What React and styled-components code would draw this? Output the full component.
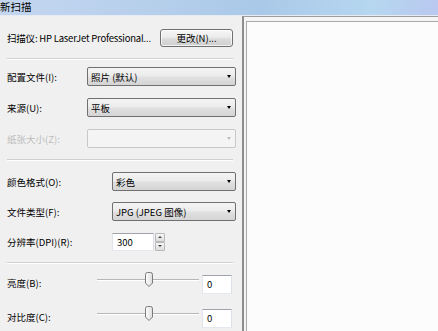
import React from "react";
import styled, { createGlobalStyle } from "styled-components";

const Global = createGlobalStyle`
  html, body { margin: 0; padding: 0; background: #f0f0f0; overflow: hidden; }
  body { font-family: "Noto Sans CJK SC", "Liberation Sans", sans-serif; font-size: 9.5px; color: #000; }
`;

const Window = styled.div`
  width: 438px;
  height: 331px;
  display: flex;
  flex-direction: column;
  overflow: hidden;
`;

const TitleBar = styled.div`
  height: 15px;
  flex: none;
  background: linear-gradient(to right, #c4d6f0 0%, #b8d0ec 30%, #a9c9e8 60%, #b6d7f0 85%, #b9c8ef 100%);
  font-size: 10.5px;
  line-height: 13px;
  padding-left: 0;
  white-space: nowrap;
  overflow: hidden;
`;

const Body = styled.div`
  flex: 1;
  display: flex;
  border-top: 1px solid #e6ecf2;
  min-height: 0;
`;

const Left = styled.div`
  width: 242px;
  flex: none;
  box-sizing: border-box;
  padding: 12px 6px 0 7px;
  display: flex;
  flex-direction: column;
`;

const ScannerRow = styled.div`
  display: flex;
  align-items: center;
  justify-content: space-between;
  height: 19px;
  padding-right: 3px;
  white-space: nowrap;
`;

const ScannerName = styled.span`
  letter-spacing: -0.2px;
`;

const Button = styled.div`
  width: 73px;
  height: 18px;
  box-sizing: border-box;
  border: 1px solid #707070;
  border-radius: 3px;
  background: linear-gradient(#f6f6f6 0%, #ececec 45%, #dcdcdc 55%, #cfcfcf 100%);
  box-shadow: inset 0 0 0 1px rgba(255,255,255,0.7);
  display: flex;
  align-items: center;
  justify-content: center;
  font-size: 9.5px;
  flex: none;
`;

const Separator = styled.div`
  height: 0;
  border-top: 1px solid #d0d0d0;
  border-bottom: 1px solid #ffffff;
  margin-right: 3px;
`;

const Section = styled.div`
  display: flex;
  flex-direction: column;
  gap: ${p => p.$gap}px;
  padding: ${p => p.$pt}px 0 ${p => p.$pb}px;
`;

const Row = styled.div`
  display: flex;
  align-items: center;
  height: 19px;
`;

const Label = styled.div`
  width: ${p => p.$w}px;
  flex: none;
  white-space: nowrap;
  color: ${p => (p.$disabled ? "#bcbcbc" : "#000")};
`;

const Combo = styled.div`
  flex: 1;
  height: 19px;
  box-sizing: border-box;
  border: 1px solid ${p => (p.$disabled ? "#c8c8c8" : "#707070")};
  border-radius: 2px;
  background: ${p =>
    p.$disabled
      ? "#f4f4f4"
      : "linear-gradient(#f4f4f4 0%, #ececec 45%, #e0e0e0 55%, #d4d4d4 100%)"};
  display: flex;
  align-items: center;
  padding-left: 3px;
  padding-right: 4px;
  white-space: nowrap;
`;

const ComboText = styled.span`
  flex: 1;
`;

const Arrow = styled.span`
  width: 0;
  height: 0;
  border-left: 2.5px solid transparent;
  border-right: 2.5px solid transparent;
  border-top: 3px solid ${p => (p.$disabled ? "#bcbcbc" : "#000")};
`;

const Field = styled.div`
  width: ${p => p.$w}px;
  height: 18px;
  box-sizing: border-box;
  border: 1px solid #abadb3;
  border-top-color: #a0a3ab;
  border-left-color: #e2e3ea;
  border-right-color: #dbdfe6;
  border-bottom-color: #e3e9ef;
  background: #fff;
  display: flex;
  align-items: center;
  padding-left: 4px;
  flex: none;
`;

const Spin = styled.div`
  display: flex;
  flex-direction: column;
  margin-left: 1px;
  height: 18px;
  width: 10px;
`;

const SpinBtn = styled.div`
  flex: 1;
  box-sizing: border-box;
  border: 1px solid #b8b8b8;
  border-radius: 1px;
  background: linear-gradient(#f6f6f6, #dedede);
  display: flex;
  align-items: center;
  justify-content: center;
`;

const SmallArrow = styled.span`
  width: 0;
  height: 0;
  border-left: 2px solid transparent;
  border-right: 2px solid transparent;
  ${p => (p.$up ? "border-bottom: 2px solid #444;" : "border-top: 2px solid #444;")}
`;

const SliderArea = styled.div`
  position: relative;
  width: 102px;
  height: 19px;
  flex: none;
  margin-right: 3px;
`;

const Track = styled.div`
  position: absolute;
  left: 0;
  right: 0;
  top: 6px;
  height: 0;
  border-top: 1px solid #b7b7b7;
  border-bottom: 1px solid #ffffff;
`;

const Thumb = styled.svg`
  position: absolute;
  left: 47px;
  top: -1px;
`;

const ValueBox = styled(Field)`
  width: 30px;
  height: 19px;
  margin-top: 3px;
`;

const Preview = styled.div`
  flex: 1;
  display: flex;
  border-left: 2px solid #8e8e8e;
  border-top: 1px solid #9d9d9d;
  padding: 4px 0 0 2px;
  background: #f4f4f4;
`;

const PreviewInner = styled.div`
  flex: 1;
  border-left: 1px solid #a9a9a9;
  border-top: 1px solid #a9a9a9;
  background: #fcfcfc;
`;

function ComboBox({ children, disabled }) {
  return (
    <Combo $disabled={disabled}>
      <ComboText>{children}</ComboText>
      <Arrow $disabled={disabled} />
    </Combo>
  );
}

function Slider() {
  return (
    <SliderArea>
      <Track />
      <Thumb width="10" height="16" viewBox="0 0 10 16">
        <defs>
          <linearGradient id="tg" x1="0" x2="1" y1="0" y2="0">
            <stop offset="0" stopColor="#ffffff" />
            <stop offset="1" stopColor="#dcdcdc" />
          </linearGradient>
        </defs>
        <path d="M1.5 2.5 Q1.5 0.5 3.5 0.5 H6.5 Q8.5 0.5 8.5 2.5 V11 L5 14.5 L1.5 11 Z" fill="url(#tg)" stroke="#7a7a7a" strokeWidth="1" />
      </Thumb>
    </SliderArea>
  );
}

export default function App() {
  return (
    <>
      <Global />
      <Window>
        <TitleBar>新扫描</TitleBar>
        <Body>
          <Left>
            <ScannerRow>
              <ScannerName>扫描仪: HP LaserJet Professional...</ScannerName>
              <Button>更改(N)...</Button>
            </ScannerRow>
            <Section $pt={11} $pb={0} $gap={0}><Separator /></Section>
            <Section $pt={7} $pb={11} $gap={12}>
              <Row>
                <Label $w={80}>配置文件(I):</Label>
                <ComboBox>照片 (默认)</ComboBox>
              </Row>
              <Row>
                <Label $w={80}>来源(U):</Label>
                <ComboBox>平板</ComboBox>
              </Row>
              <Row>
                <Label $w={80} $disabled>纸张大小(Z):</Label>
                <ComboBox disabled></ComboBox>
              </Row>
            </Section>
            <Separator />
            <Section $pt={11} $pb={11} $gap={11}>
              <Row>
                <Label $w={105}>颜色格式(O):</Label>
                <ComboBox>彩色</ComboBox>
              </Row>
              <Row>
                <Label $w={105}>文件类型(F):</Label>
                <ComboBox>JPG (JPEG 图像)</ComboBox>
              </Row>
              <Row>
                <Label $w={105}>分辨率(DPI)(R):</Label>
                <Field $w={42}>300</Field>
                <Spin>
                  <SpinBtn><SmallArrow $up /></SpinBtn>
                  <SpinBtn><SmallArrow /></SpinBtn>
                </Spin>
              </Row>
            </Section>
            <Separator />
            <Section $pt={9} $pb={0} $gap={15}>
              <Row>
                <Label $w={90}>亮度(B):</Label>
                <Slider />
                <ValueBox>0</ValueBox>
              </Row>
              <Row>
                <Label $w={90}>对比度(C):</Label>
                <Slider />
                <ValueBox>0</ValueBox>
              </Row>
            </Section>
          </Left>
          <Preview>
            <PreviewInner />
          </Preview>
        </Body>
      </Window>
    </>
  );
}
